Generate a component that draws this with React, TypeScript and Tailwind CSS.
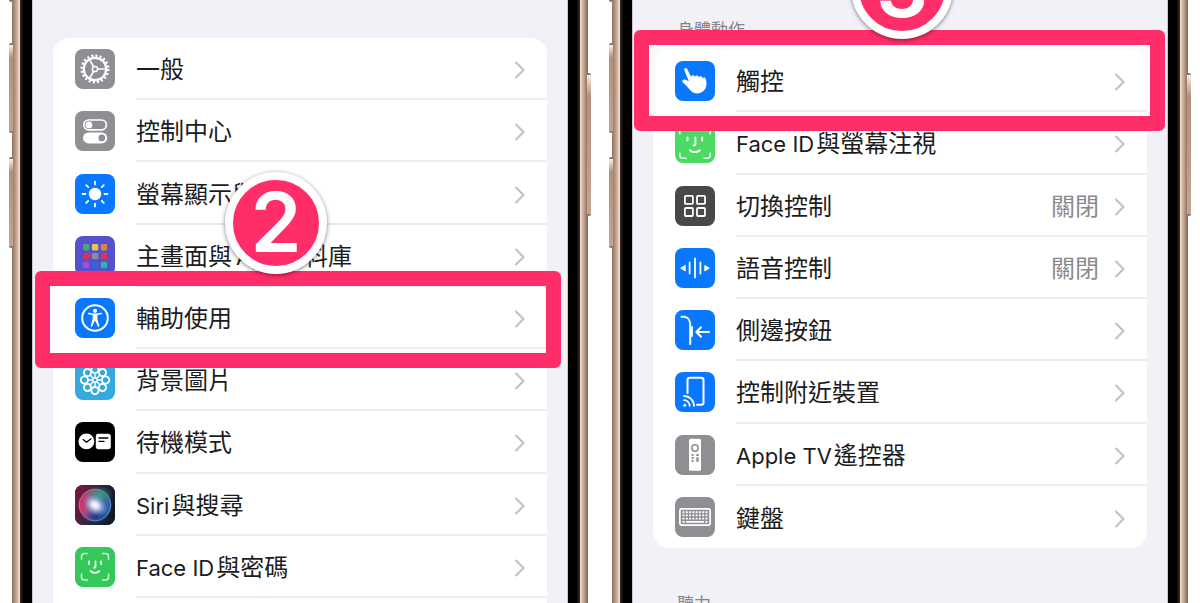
import type { ReactNode } from "react";
import clsx from "clsx";

type Row = {
  label: string;
  icon: ReactNode;
  tile: string;
  value?: string;
  highlight?: string;
};

const round = { strokeLinecap: "round", strokeLinejoin: "round" } as const;

const GearIcon = () => (
  <g fill="none" stroke="#fff">
    <circle cx="20" cy="20" r="13.3" strokeWidth="2.4" strokeDasharray="2.1 2.08" />
    <circle cx="20" cy="20" r="11.2" strokeWidth="2.2" />
    <circle cx="20" cy="20" r="2.6" strokeWidth="1.5" />
    <path d="M22.6 20H31M18.7 17.8l-4.4-7.4M18.7 22.2l-4.4 7.4" strokeWidth="1.7" />
  </g>
);

const TogglesIcon = () => (
  <>
    <rect x="8.8" y="9" width="22.6" height="9.8" rx="4.9" fill="none" stroke="#fff" strokeWidth="1.7" />
    <circle cx="13.9" cy="13.9" r="3.4" fill="#fff" />
    <rect x="8" y="21.4" width="24.2" height="11" rx="5.5" fill="#fff" />
    <circle cx="26.8" cy="26.9" r="3.3" fill="#8e8e93" />
  </>
);

const SunIcon = () => (
  <g stroke="#fff" strokeWidth="1.8" {...round}>
    <circle cx="20" cy="20" r="6.2" fill="#fff" stroke="none" />
    {[0, 45, 90, 135, 180, 225, 270, 315].map((a) => (
      <path key={a} d="M20 10.4V7.6" transform={`rotate(${a} 20 20)`} />
    ))}
  </g>
);

const appColors = [
  "#46a86c", "#eac646", "#d9853a",
  "#dc3350", "#8b8ba0", "#dc3350",
  "#a24be0", "#2f66e0", "#2bb3a8",
];

const AppGridIcon = () => (
  <>
    {appColors.map((fill, i) => (
      <rect key={i} x={8 + (i % 3) * 8.9} y={8 + Math.floor(i / 3) * 8.9} width="6.4" height="6.4" rx="1.4" fill={fill} />
    ))}
  </>
);

const AccessibilityIcon = () => (
  <>
    <circle cx="20" cy="20" r="12.8" fill="none" stroke="#fff" strokeWidth="2" />
    <circle cx="20" cy="12.8" r="2.1" fill="#fff" />
    <path
      d="M13.4 16.2c-.9-.2-.8-1.6.2-1.4 4.3.8 8.5.8 12.8 0 1-.2 1.1 1.2.2 1.4l-4.2.9v4l1.900 6.600c.3 1-1.100 1.500-1.500.5L20.300 23h-.6l-2.500 5.200c-.4 1-1.800.5-1.500-.5l1.900-6.600v-4z"
      fill="#fff"
    />
  </>
);

const FlowerIcon = () => (
  <g fill="none" stroke="#fff" strokeWidth="1.9">
    {[0, 45, 90, 135, 180, 225, 270, 315].map((a) => (
      <circle key={a} cx="20" cy="9.4" r="3.6" transform={`rotate(${a} 20 20)`} />
    ))}
    {[0, 45, 90, 135, 180, 225, 270, 315].map((a) => (
      <path key={a} d="M20 17.4v-4" transform={`rotate(${a} 20 20)`} strokeWidth="1.4" />
    ))}
    <circle cx="20" cy="20" r="2.2" strokeWidth="1.4" />
  </g>
);

const StandbyIcon = () => (
  <>
    <circle cx="11.4" cy="19.4" r="7.9" fill="#fff" />
    <path d="M8.2 17.6l3.2 2.6 4.6-3.4" fill="none" stroke="#000" strokeWidth="1.3" {...round} />
    <rect x="20.8" y="11.8" width="15" height="15.4" rx="2.6" fill="#fff" />
    <path d="M24 16h8.800M24 19.400h5" stroke="#000" strokeWidth="1.4" {...round} />
  </>
);

const SiriIcon = () => (
  <>
    <defs>
      <radialGradient id="siri-glow">
        <stop offset="0" stopColor="#fff" />
        <stop offset=".3" stopColor="#e2effb" stopOpacity=".9" />
        <stop offset="1" stopColor="#5aa8f0" stopOpacity="0" />
      </radialGradient>
      <linearGradient id="siri-back" x1="0" y1=".3" x2="1" y2=".6">
        <stop offset="0" stopColor="#7d1540" />
        <stop offset=".5" stopColor="#2b2740" />
        <stop offset="1" stopColor="#0d1a28" />
      </linearGradient>
      <linearGradient id="siri-orb" x1="0" y1=".4" x2="1" y2=".6">
        <stop offset="0" stopColor="#d62f60" />
        <stop offset=".45" stopColor="#96588c" />
        <stop offset="1" stopColor="#1769b8" />
      </linearGradient>
      <radialGradient id="siri-green" cx=".5" cy=".5" r=".5">
        <stop offset="0" stopColor="#2fa583" />
        <stop offset="1" stopColor="#1f8f74" stopOpacity="0" />
      </radialGradient>
      <radialGradient id="siri-navy">
        <stop offset="0" stopColor="#123a8c" />
        <stop offset="1" stopColor="#123a8c" stopOpacity="0" />
      </radialGradient>
    </defs>
    <rect width="40" height="40" fill="url(#siri-back)" />
    <circle cx="20" cy="20" r="16" fill="url(#siri-orb)" />
    <ellipse cx="24" cy="10" rx="14" ry="9" fill="url(#siri-green)" />
    <ellipse cx="21" cy="32" rx="13" ry="8" fill="url(#siri-navy)" />
    <circle cx="20" cy="20" r="16" fill="none" stroke="#b9c4d6" strokeOpacity=".45" />
    <ellipse cx="20" cy="20" rx="13" ry="10" fill="url(#siri-glow)" transform="rotate(35 20 20)" />
  </>
);

const FaceIcon = () => (
  <g fill="none" stroke="#fff" {...round}>
    <path
      d="M6.500 12.500V9.500a3 3 0 0 1 3-3h3M27.500 6.500h3a3 3 0 0 1 3 3v3M33.500 27v3a3 3 0 0 1-3 3h-3M12.500 33h-3a3 3 0 0 1-3-3v-3"
      strokeWidth="1.6"
      strokeOpacity=".75"
    />
    <path d="M14 14.500v2.500M26 14.500v2.500M20.500 14.500v5c0 1-.5 1.300-1.500 1.300M15.600 24.200c2.400 2.300 6.400 2.300 8.800 0" strokeWidth="1.800" />
  </g>
);

const FaceGazeIcon = () => (
  <g fill="none" stroke="#fff" {...round}>
    <path
      d="M4.800 11V7.800a3 3 0 0 1 3-3H11M29 4.800h3.200a3 3 0 0 1 3 3V11M35.200 30v2.200a3 3 0 0 1-3 3H29M11 35.200H7.800a3 3 0 0 1-3-3V30"
      strokeWidth="1.6"
      strokeOpacity=".85"
    />
    <path d="M12.500 14.500v3M27.200 14.500v3M20.400 14.500v6.500c0 1-.6 1.400-1.800 1.400M15 27.200c2.800 2.600 7 2.600 9.800 0" strokeWidth="1.900" />
  </g>
);

const HandIcon = () => (
  <path
    d="M9.300 9.200c-.7-1.900 1.900-3.100 2.900-1.200l4 7.900c.2-2 2.600-2.300 3.400-.7l.3.700c.3-1.700 2.800-2 3.600-.3l.3.900c.5-1.500 2.700-1.600 3.500 0l.3.700c.8-1.300 2.600-.9 3.100.6 1.600 5.200.8 9.600-2.300 12.300-4.400 3.800-10.600 2.800-14-1.900-1.800-2.500-4.200-4.700-6.600-6.700-1.500-1.400.2-3.600 2.300-2.900l3.700 1.600z"
    fill="#fff"
  />
);

const SquaresIcon = () => (
  <g fill="none" stroke="#fff" strokeWidth="1.8">
    <rect x="9.900" y="9.900" width="8" height="8" rx="1" />
    <rect x="22" y="9.900" width="8" height="8" rx="1" />
    <rect x="9.900" y="22" width="8" height="8" rx="1" />
    <rect x="22" y="22" width="8" height="8" rx="1" />
  </g>
);

const VoiceIcon = () => (
  <g stroke="#fff" strokeWidth="1.8" {...round}>
    <path d="M14.600 14.500v11M20 10.500v19M25.400 14.500v11" />
    <path d="M6 20l4.200-2.600v5.200zM34 20l-4.200-2.600v5.200z" fill="#fff" strokeWidth="1" />
  </g>
);

const SideButtonIcon = () => (
  <g fill="none" stroke="#fff" strokeWidth="2" {...round}>
    <path d="M6.500 6.800h2.300c3.800 0 6.400 3.400 6.400 8.200v19" />
    <path d="M17 17v9" strokeWidth="1.800" />
    <path d="M34 22H21.500M26 17.200L21.300 22l4.700 4.800" />
  </g>
);

const NearbyIcon = () => (
  <g fill="none" stroke="#fff" strokeWidth="2" {...round}>
    <path d="M12.500 21V8a2.300 2.300 0 0 1 2.300-2.300h11.400A2.300 2.300 0 0 1 28.500 8v22.500a2.300 2.300 0 0 1-2.300 2.300H22" />
    <path d="M9 24a9.800 9.800 0 0 1 10 9.800M9 28.200a5.600 5.600 0 0 1 5.700 5.600" strokeWidth="1.800" />
    <circle cx="9.700" cy="33.200" r="1.500" fill="#fff" stroke="none" />
  </g>
);

const RemoteIcon = () => (
  <>
    <rect x="14" y="3.800" width="12" height="32" rx="1.500" fill="#fff" />
    <g fill="none" stroke="#8e8e93">
      <circle cx="20" cy="13" r="3.200" strokeWidth="1.500" />
      <path d="M17.600 19v2M17.600 22v2M17.600 25v2" strokeWidth="2" />
      <path d="M22.500 19v2M22.500 22.300v4.500" strokeWidth="2.400" />
    </g>
  </>
);

const KeyboardIcon = () => (
  <g fill="none" stroke="#fff">
    <rect x="4.900" y="11.900" width="30.200" height="16.200" rx="1.500" strokeWidth="1.700" />
    <path d="M7.500 15.200h25M7.500 18.400h25M7.500 21.600h25" strokeWidth="1.900" strokeDasharray="2 1.280" />
    <path d="M7.500 24.800h2.200M11 24.800h18M30.300 24.800h2.200" strokeWidth="1.800" />
  </g>
);

const generalRows: Row[] = [
  { label: "一般", icon: <GearIcon />, tile: "bg-[#8e8e93]" },
  { label: "控制中心", icon: <TogglesIcon />, tile: "bg-[#8e8e93]" },
  { label: "螢幕顯示與亮度", icon: <SunIcon />, tile: "bg-[#0a78fe]" },
  { label: "主畫面與App資料庫", icon: <AppGridIcon />, tile: "bg-[#5750cc]" },
  {
    label: "輔助使用",
    icon: <AccessibilityIcon />,
    tile: "bg-[#0a78fe]",
    highlight: "-top-4 -bottom-[19px] -left-[18px] -right-[14px]",
  },
  { label: "背景圖片", icon: <FlowerIcon />, tile: "bg-[#34a9de]" },
  { label: "待機模式", icon: <StandbyIcon />, tile: "bg-black" },
  { label: "Siri與搜尋", icon: <SiriIcon />, tile: "bg-[#2b2740]" },
  { label: "Face ID與密碼", icon: <FaceIcon />, tile: "bg-[#34c759]" },
];

const motorRows: Row[] = [
  {
    label: "觸控",
    icon: <HandIcon />,
    tile: "bg-[#0a78fe]",
    highlight: "-top-5 -bottom-[19px] -left-[19px] -right-[18px]",
  },
  { label: "Face ID與螢幕注視", icon: <FaceGazeIcon />, tile: "bg-[#4cd964]" },
  { label: "切換控制", icon: <SquaresIcon />, tile: "bg-[#48484a]", value: "關閉" },
  { label: "語音控制", icon: <VoiceIcon />, tile: "bg-[#0a78fe]", value: "關閉" },
  { label: "側邊按鈕", icon: <SideButtonIcon />, tile: "bg-[#0a78fe]" },
  { label: "控制附近裝置", icon: <NearbyIcon />, tile: "bg-[#0a78fe]" },
  { label: "Apple TV遙控器", icon: <RemoteIcon />, tile: "bg-[#8e8e93]" },
  { label: "鍵盤", icon: <KeyboardIcon />, tile: "bg-[#8e8e93]" },
];

// Latin runs sit a little smaller than the Chinese characters beside them
function Label({ text }: { text: string }) {
  return (
    <span className="whitespace-nowrap">
      {text.split(/([A-Za-z ]+)/).filter(Boolean).map((part, i) =>
        /[A-Za-z]/.test(part) ? (
          <span key={i} className={clsx("mr-0.5 text-[22px]", i > 0 && "ml-1")}>
            {part}
          </span>
        ) : (
          part
        )
      )}
    </span>
  );
}

function SettingsRow({ row, last }: { row: Row; last?: boolean }) {
  return (
    <li className="relative">
      {row.highlight && <span className={clsx("absolute -z-10 rounded-md bg-white/70", row.highlight)} />}
      <a href="#" className="flex h-full items-center gap-[21px] pl-[22px]">
        <svg viewBox="0 0 40 40" className={clsx("size-10 shrink-0 rounded-lg", row.tile)} aria-hidden="true">
          {row.icon}
        </svg>
        <span
          className={clsx(
            "flex h-full min-w-0 flex-1 items-center justify-between pt-1 pr-[22px] text-2xl text-[#1c1c1e]",
            !last && "border-b-2 border-[#ededf0]"
          )}
        >
          <Label text={row.label} />
          <span className="flex items-center gap-[15px] text-[#8a8a8e]">
            {row.value}
            <svg viewBox="0 0 11 18" className="h-[18px] w-[11px]" fill="none" stroke="#c3c3c6" strokeWidth="2.2" aria-hidden="true">
              <path d="M1.500 1l8 8-8 8" />
            </svg>
          </span>
        </span>
      </a>
      {row.highlight && (
        <span className={clsx("pointer-events-none absolute z-10 rounded-md border-[15px] border-[#ff2d68]", row.highlight)} />
      )}
    </li>
  );
}

function StepBadge({ step, className }: { step: number; className: string }) {
  return (
    <div
      className={clsx(
        "absolute z-20 flex size-[102px] items-center justify-center rounded-full border-8 border-white bg-[#ff2d68] text-[82px] leading-none font-semibold text-white shadow-[0_1px_4px_rgba(0,0,0,0.5)]",
        className
      )}
    >
      {step}
    </div>
  );
}

function SideKey({ className }: { className: string }) {
  return (
    <span
      className={clsx(
        "absolute w-1 rounded-xs border-y-2 border-[#8a7468] bg-linear-to-b from-[#fbf1ea] via-[#b3907a] via-15% to-[#c5a48f]",
        className
      )}
    />
  );
}

function Phone({ children }: { children: ReactNode }) {
  return (
    <div className="flex min-w-0 px-3">
      <div className="relative w-2 shrink-0 bg-linear-to-r from-[#8c7263] via-[#b89683] via-40% to-[#f7dfd3]">
        <SideKey className="-top-20 -left-[3px] h-[82px]" />
        <SideKey className="top-[43px] -left-[3px] h-[90px]" />
        <SideKey className="top-[157px] -left-[3px] h-[91px]" />
      </div>
      <div className="w-3 shrink-0 bg-linear-to-r from-[#3a3230] via-black via-40% to-black" />
      <div className="relative isolate flex min-w-0 flex-1 flex-col overflow-hidden border-x border-[#c9c8d0] bg-[#f2f1f8] px-5">
        {children}
      </div>
      <div className="w-3 shrink-0 bg-linear-to-l from-[#3a3230] via-black via-40% to-black" />
      <div className="relative w-2 shrink-0 bg-linear-to-l from-[#7d6659] via-[#b89683] via-40% to-[#f7dfd3]">
        <SideKey className="top-[73px] -right-[3px] h-[143px]" />
      </div>
    </div>
  );
}

export default function App() {
  return (
    <main className="grid h-screen grid-cols-2 overflow-hidden bg-white font-[Inter,'Noto_Sans_CJK_TC',sans-serif]">
      <Phone>
        <div className="mt-[38px] flex-1 rounded-t-2xl bg-white">
          <ul className="grid h-[560px] auto-rows-fr">
            {generalRows.map((row) => (
              <SettingsRow key={row.label} row={row} />
            ))}
          </ul>
        </div>
        <StepBadge step={2} className="top-[172px] left-48" />
      </Phone>
      <Phone>
        <h2 className="mt-[18px] mb-2 pl-6 text-[17px] leading-6 text-[#85858b]">身體動作</h2>
        <ul className="grid h-[498px] shrink-0 auto-rows-fr rounded-2xl bg-white">
          {motorRows.map((row, i) => (
            <SettingsRow key={row.label} row={row} last={i === motorRows.length - 1} />
          ))}
        </ul>
        <h2 className="mt-11 pl-6 text-[17px] leading-6 text-[#85858b]">聽力</h2>
        <StepBadge step={3} className="-top-[63px] left-[218px]" />
      </Phone>
    </main>
  );
}
